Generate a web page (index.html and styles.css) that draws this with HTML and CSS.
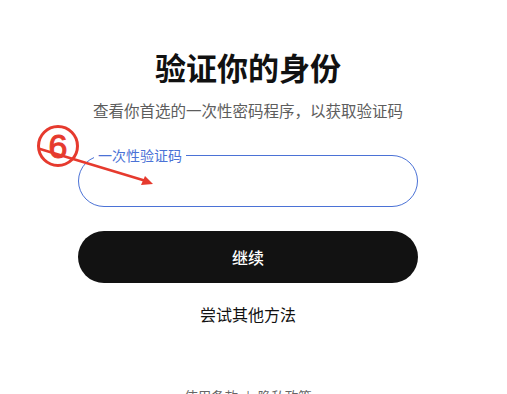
FILE: index.html
```html
<!DOCTYPE html>
<html lang="zh-CN">
<head>
<meta charset="utf-8">
<link rel="stylesheet" href="styles.css">
</head>
<body>
<main class="page">
  <h1 class="title">验证你的身份</h1>
  <p class="subtitle">查看你首选的一次性密码程序，以获取验证码</p>
  <div class="field">
    <span class="field-label">一次性验证码</span>
    <input class="field-input" type="text" aria-label="一次性验证码">
  </div>
  <button class="btn-primary" type="button">继续</button>
  <a class="alt-link" href="#">尝试其他方法</a>
  <footer class="footer"><a href="#">使用条款</a><span class="sep">|</span><a href="#">隐私政策</a></footer>
</main>
<svg class="annotation" width="507" height="394" viewBox="0 0 507 394">
  <circle cx="58" cy="146" r="19.5" fill="none" stroke="#e63a2e" stroke-width="3"/>
  <text x="58" y="158" text-anchor="middle" font-family="Liberation Sans, Arial, sans-serif" font-size="34" font-weight="400" fill="#e63a2e" stroke="#e63a2e" stroke-width="1">6</text>
  <line x1="40" y1="149" x2="146" y2="181" stroke="#e63a2e" stroke-width="2.5" stroke-linecap="round"/>
  <polygon points="153,184 141,185 145,176" fill="#e63a2e"/>
</svg>
</body>
</html>
```
FILE: styles.css
```css
html, body {
  margin: 0;
  padding: 0;
  background: #fff;
}
body {
  font-family: "Noto Sans CJK SC", "Noto Sans", sans-serif;
  color: #111;
  position: relative;
  width: 507px;
  height: 394px;
  overflow: hidden;
}
.page {
  width: 496px;
  display: flex;
  flex-direction: column;
  align-items: center;
  padding-top: 47px;
}
.title {
  margin: 0;
  font-size: 31px;
  line-height: 40px;
  font-weight: 600;
  color: #111;
}
.subtitle {
  margin: 11px 0 0;
  font-size: 15.5px;
  line-height: 24px;
  color: #5d5d5d;
}
.field {
  position: relative;
  width: 340px;
  margin-top: 33px;
}
.field-input {
  display: block;
  box-sizing: border-box;
  width: 340px;
  height: 52px;
  border: 1px solid #4b72d6;
  border-radius: 26px;
  background: #fff;
  outline: none;
  padding: 0 20px;
  font: inherit;
}
.field-label {
  position: absolute;
  left: 16px;
  top: -10px;
  padding: 0 4px;
  background: #fff;
  font-size: 14px;
  line-height: 20px;
  color: #4b72d6;
}
.btn-primary {
  margin-top: 24px;
  width: 340px;
  height: 52px;
  border: none;
  border-radius: 26px;
  background: #121212;
  color: #fff;
  font-family: inherit;
  font-size: 16px;
  font-weight: 500;
}
.alt-link {
  margin-top: 19px;
  font-size: 16px;
  line-height: 24px;
  color: #111;
  text-decoration: none;
}
.footer {
  margin-top: 60px;
  font-size: 13.5px;
  line-height: 20px;
  color: #666;
  display: flex;
  gap: 8px;
}
.footer a {
  color: #666;
  text-decoration: none;
}
.annotation {
  position: absolute;
  left: 0;
  top: 0;
  pointer-events: none;
}
```
